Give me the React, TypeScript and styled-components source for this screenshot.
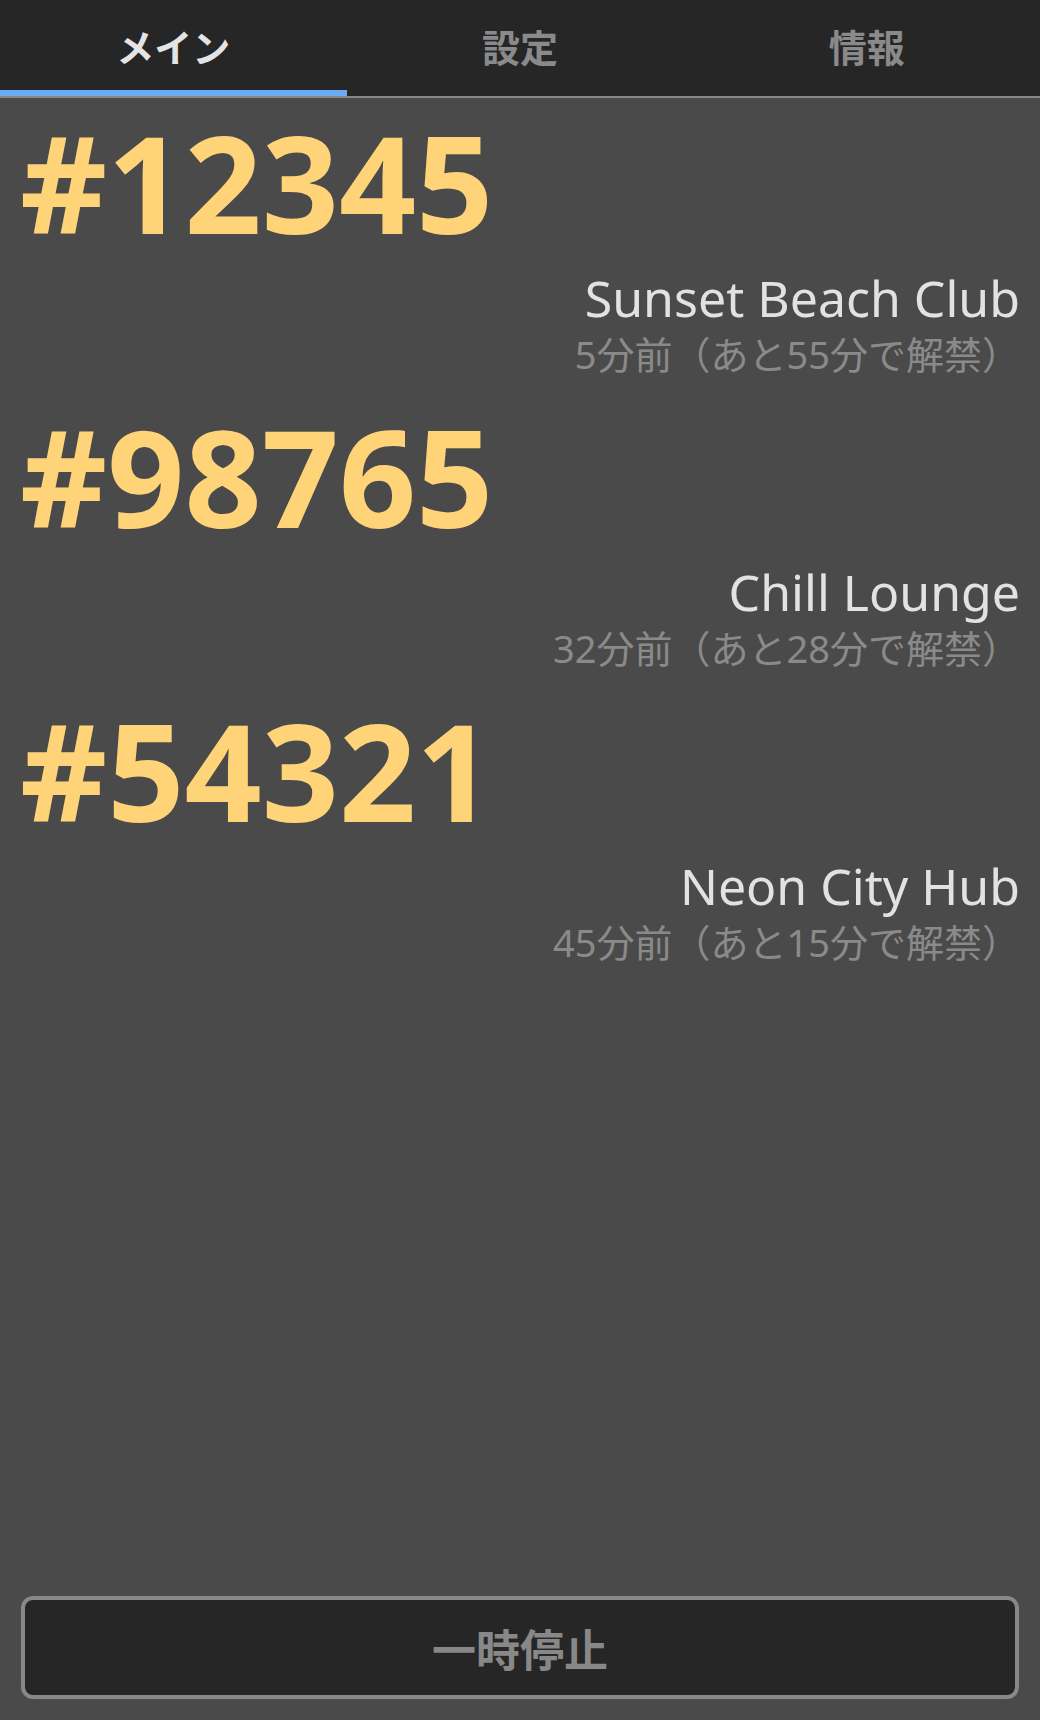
import { createGlobalStyle } from "styled-components";
import styled from "styled-components";

const GlobalStyle = createGlobalStyle`
  html, body {
    margin: 0;
    padding: 0;
    background: #4a4a4a;
  }
  body {
    font-family: "Noto Sans", "Noto Sans CJK JP", sans-serif;
  }
`;

interface Ticket {
  id: string;
  venue: string;
  elapsed: number;
  remaining: number;
}

const tickets: Ticket[] = [
  { id: "12345", venue: "Sunset Beach Club", elapsed: 5, remaining: 55 },
  { id: "98765", venue: "Chill Lounge", elapsed: 32, remaining: 28 },
  { id: "54321", venue: "Neon City Hub", elapsed: 45, remaining: 15 },
];

const tabs = ["メイン", "設定", "情報"];

const Screen = styled.div`
  min-height: 100vh;
  display: flex;
  flex-direction: column;
  background: #4a4a4a;
`;

const TabBar = styled.nav`
  display: grid;
  grid-template-columns: repeat(3, 1fr);
  height: 96px;
  background: #262626;
  border-bottom: 2px solid #888;
`;

const Tab = styled.button<{ $active?: boolean }>`
  display: flex;
  align-items: center;
  justify-content: center;
  border: none;
  border-bottom: 6px solid ${(p) => (p.$active ? "#6aacf2" : "transparent")};
  background: transparent;
  padding: 0;
  font-family: "Noto Sans CJK JP", sans-serif;
  font-size: 38px;
  font-weight: 700;
  color: ${(p) => (p.$active ? "#e4e4e4" : "#8a8a8a")};
  cursor: pointer;
`;

const List = styled.main`
  flex: 1;
  display: flex;
  flex-direction: column;
  padding: 4px 20px 0 20px;
`;

const Item = styled.section`
  display: flex;
  flex-direction: column;
  padding-bottom: 22px;
`;

const Number = styled.div`
  font-size: 135px;
  font-weight: 700;
  line-height: 160px;
  color: #ffd479;
`;

const Venue = styled.div`
  margin-top: 2px;
  text-align: right;
  font-size: 50px;
  line-height: 68px;
  color: #e2e2e2;
`;

const Status = styled.div`
  margin-top: 2px;
  text-align: right;
  font-size: 38px;
  line-height: 40px;
  color: #8a8a8a;
`;

const PauseButton = styled.button`
  margin: 0 21px 21px;
  height: 103px;
  border: 4px solid #888;
  border-radius: 12px;
  background: #262626;
  font-family: "Noto Sans CJK JP", sans-serif;
  font-size: 44px;
  font-weight: 700;
  color: #888;
  cursor: pointer;
`;

export default function App() {
  return (
    <>
      <GlobalStyle />
      <Screen>
        <TabBar>
          {tabs.map((t, i) => (
            <Tab key={t} $active={i === 0}>
              {t}
            </Tab>
          ))}
        </TabBar>
        <List>
          {tickets.map((t) => (
            <Item key={t.id}>
              <Number>#{t.id}</Number>
              <Venue>{t.venue}</Venue>
              <Status>
                {t.elapsed}分前（あと{t.remaining}分で解禁）
              </Status>
            </Item>
          ))}
        </List>
        <PauseButton>一時停止</PauseButton>
      </Screen>
    </>
  );
}
